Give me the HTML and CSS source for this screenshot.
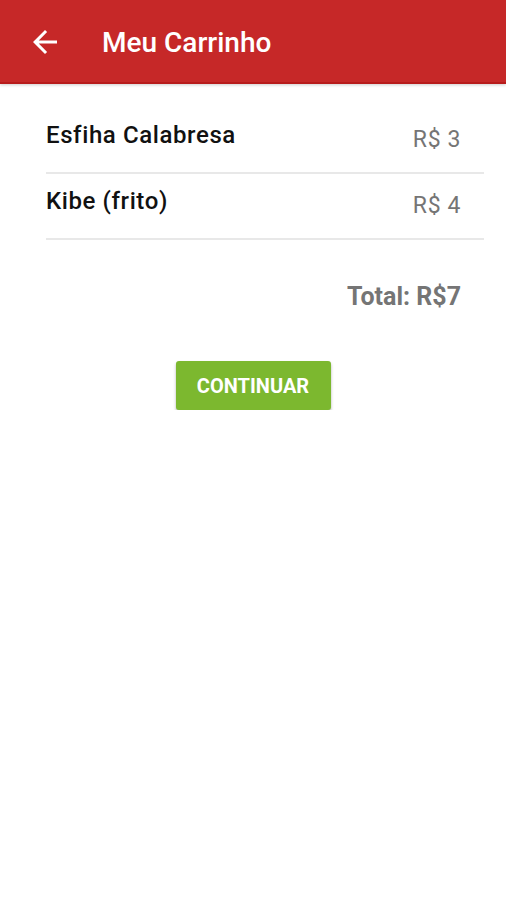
FILE: index.html
```html
<!DOCTYPE html>
<html lang="pt">
<head>
    <meta charset="UTF-8" />
    <title>Meu Carrinho</title>
    <link rel="stylesheet" href="styles.css">
</head>
<body>

<!-- ===== APP BAR ===== -->
<header class="appbar">
    <button class="back" aria-label="Voltar">
        <svg viewBox="0 0 24 24" fill="#fff">
            <path d="M20 11H7.83l5.59-5.59L12 4l-8 8 8 8 1.41-1.41L7.83 13H20v-2z"/>
        </svg>
    </button>
    <h1 class="title">Meu Carrinho</h1>
</header>

<!-- ────────── Cart ────────── -->
<main class="cart">
    <ul class="items">
        <li class="item">
            <span class="item-name">Esfiha Calabresa</span>
            <span class="item-price">R$ 3</span>
        </li>
        <li class="item">
            <span class="item-name">Kibe (frito)</span>
            <span class="item-price">R$ 4</span>
        </li>
    </ul>

    <div class="total">Total: R$7</div>

    <div class="actions">
        <button class="btn-continue">CONTINUAR</button>
    </div>
</main>

</body>
</html>
```

FILE: styles.css
```css
* { box-sizing: border-box; }

body{
    margin:0;
    font-family: Roboto, "Noto Sans", sans-serif;
    background:#fff;
}

/* ─────────── App bar ─────────── */
.appbar{
    height:84px;
    background:#c62828;
    color:#fff;
    display:flex;
    align-items:center;
    padding:0 0 0 27px;
    box-shadow:0 1px 3px rgba(0,0,0,.2);
    border-bottom:2px solid #b71c1c;
}
.appbar .back{
    background:none;
    border:none;
    padding:0;
    width:36px;
    height:36px;
    margin-top:2px;
    display:flex;
    align-items:center;
    justify-content:center;
    cursor:pointer;
}
.appbar .back svg{
    width:36px;
    height:36px;
}
.appbar .title{
    margin:2px 0 0 39px;
    font-size:28px;
    font-weight:500;
}

/* ────────── Cart list ────────── */
.cart{
    padding:24px 22px 0 46px;
}
.items{
    list-style:none;
    margin:0;
    padding:0;
}
.item{
    display:flex;
    justify-content:space-between;
    align-items:flex-start;
    padding:12px 23px 17px 0;
    border-bottom:2px solid #e8e8e8;
    line-height:30px;
}
.item-name{
    font-size:24px;
    font-weight:500;
    letter-spacing:.6px;
    color:#111;
}
.item-price{
    font-size:23px;
    letter-spacing:.6px;
    color:#757575;
    margin-top:5px;
}

.total{
    text-align:right;
    padding:42px 23px 0 0;
    line-height:30px;
    font-size:25px;
    font-weight:700;
    color:#757575;
}

.actions{
    display:flex;
    justify-content:center;
    padding-top:49px;
    margin-left:-24px;
}
.btn-continue{
    width:155px;
    height:49px;
    border:none;
    border-radius:3px;
    background:#7cb82f;
    color:#fff;
    font-family:inherit;
    font-size:20px;
    font-weight:700;
    box-shadow:0 2px 3px rgba(0,0,0,.3);
    cursor:pointer;
}
```
